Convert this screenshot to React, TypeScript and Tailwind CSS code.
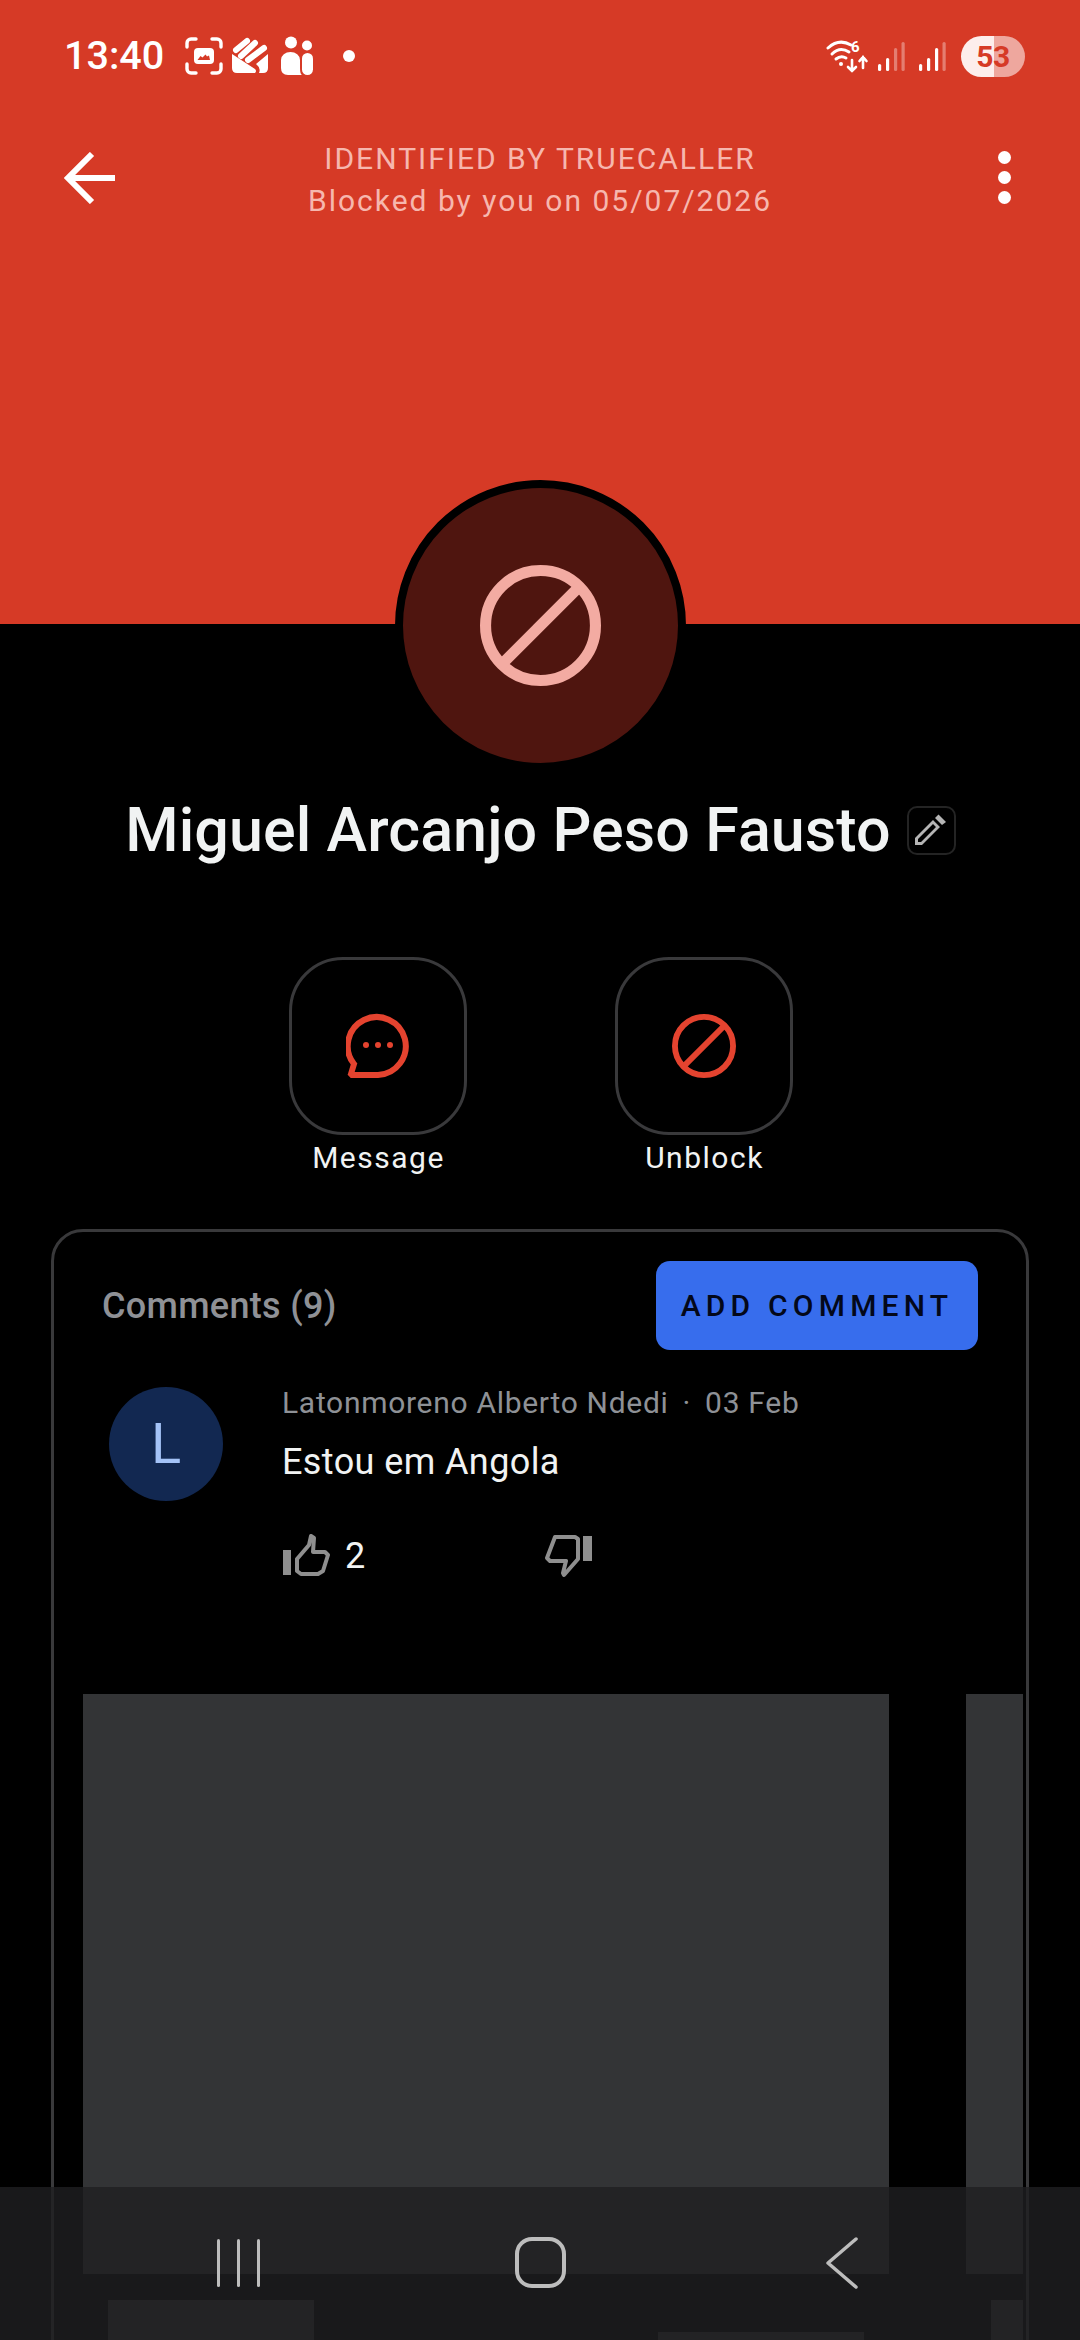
const font = "font-['Roboto',sans-serif]";

function StatusIcons() {
  return (
    <div className="flex items-center">
      {/* screenshot */}
      <svg width="38" height="38" viewBox="0 0 38 38" className="ml-[21px]" fill="none" stroke="#fff" strokeWidth="3.4" strokeLinecap="round">
        <path d="M2 10V6a4 4 0 0 1 4-4h5M27 2h5a4 4 0 0 1 4 4v4M36 27v5a4 4 0 0 1-4 4h-5M11 36H6a4 4 0 0 1-4-4v-5" />
        <rect x="9" y="11" width="20" height="16" rx="4" fill="#fff" stroke="none" />
        <path d="M12.500 23l3-4 2 1.500 3-3 1.500 2 2-1 1 4.500z" fill="#d63a26" stroke="none" />
      </svg>
      {/* mail */}
      <svg width="38" height="38" viewBox="0 0 38 38" className="ml-[8px]">
        <path d="M5 13L16 4M10 19L24 6M17 23L33 11" stroke="#fff" strokeWidth="6" strokeLinecap="round" />
        <path d="M1 17L24 32q2 2 0 4H6q-5 0-5-5zM37 17v14q0 5-5 5h-4q2-5-2-8l-1-1z" fill="#fff" />
      </svg>
      {/* people */}
      <svg width="34" height="40" viewBox="0 0 34 40" className="ml-[11px]" fill="#fff">
        <circle cx="11" cy="6.500" r="6" />
        <circle cx="27" cy="9.500" r="5" />
        <path d="M1 24a9.500 8 0 0 1 19 0v8q0 6 2 7H8q-7 0-7-7z" />
        <rect x="22" y="17" width="11" height="22" rx="5.500" />
      </svg>
      <div className="ml-[29px] w-[12px] h-[12px] rounded-full bg-white" />
    </div>
  );
}

function Signal({ faint }: { faint: number }) {
  const bars = [
    { x: 0, y: 22 },
    { x: 8, y: 16 },
    { x: 16, y: 6 },
    { x: 23.500, y: 0 },
  ];
  return (
    <svg width="27" height="29" viewBox="0 0 27 29">
      {bars.map((b, i) => (
        <rect key={i} x={b.x} y={b.y} width="3.200" height={29 - b.y} rx="1.500" fill="#fff" opacity={i >= 4 - faint ? 0.35 : 1} />
      ))}
    </svg>
  );
}

function StatusRight() {
  return (
    <div className="flex items-center">
      <svg width="44" height="34" viewBox="0 0 44 34" fill="none" stroke="#fff" strokeLinecap="round">
        <path d="M3 9Q14-1 26 6" strokeWidth="3" />
        <path d="M7 15Q15 7 24 13" strokeWidth="3" />
        <path d="M11 20Q16 16 21 19" strokeWidth="3" />
        <circle cx="16" cy="25" r="2" fill="#fff" stroke="none" />
        <text x="26" y="13" fill="#fff" stroke="none" fontSize="15" fontWeight="700" fontFamily="Roboto, sans-serif">6</text>
        <path d="M27 21v11M23 28l4 4 4-4M38 29V18M34.500 22l3.500-4 3.500 4" strokeWidth="2.600" />
      </svg>
      <div className="ml-[9px]"><Signal faint={2} /></div>
      <div className="ml-[14px]"><Signal faint={1} /></div>
      <div className="relative ml-[15px] w-[64px] h-[41px] rounded-full overflow-hidden flex">
        <div className="w-[33px] bg-[#fdeeec]" />
        <div className="flex-1 bg-[#eea79e]" />
        <span className={`absolute inset-0 flex items-center justify-center text-[30px] font-bold tracking-[-0.5px] text-[#d63a26] ${font}`}>53</span>
      </div>
    </div>
  );
}

function BlockIcon({ size, color, stroke }: { size: number; color: string; stroke: number }) {
  return (
    <svg width={size} height={size} viewBox="0 0 120 120" fill="none" stroke={color} strokeWidth={stroke}>
      <circle cx="60" cy="60" r={60 - stroke / 2} />
      <path d="M19 101L101 19" />
    </svg>
  );
}

function ActionButton({ label, children }: { label: string; children: React.ReactNode }) {
  return (
    <div className="flex flex-col items-center w-[178px]">
      <div className="w-[178px] h-[178px] rounded-[54px] border-[3px] border-[#39393b] flex items-center justify-center">
        {children}
      </div>
      <span className="mt-[5px] pl-[2px] text-[30px] leading-[36px] tracking-[1.5px] text-[#f1f3f3] whitespace-nowrap">{label}</span>
    </div>
  );
}

export default function App() {
  return (
    <div className={`relative h-[2340px] w-[1080px] overflow-hidden bg-black ${font}`}>
      {/* Red header */}
      <div className="h-[624px] bg-[#d63a26]">
        <div className="flex items-center justify-between pl-[64px] pr-[55px] pt-[34px] h-[78px]">
          <div className="flex items-center">
            <span className="text-[39.5px] leading-[44px] font-medium text-white">13:40</span>
            <StatusIcons />
          </div>
          <StatusRight />
        </div>
        <div className="mt-[60px] flex items-start justify-between pl-[64px] pr-[69px]">
          <div className="w-[52px] pt-[14px]">
            <svg width="52" height="52" viewBox="0 0 52 52" fill="none" stroke="#fff" strokeWidth="6">
              <path d="M51 26H4M28 2L4 26l24 24" />
            </svg>
          </div>
          <div className="text-center text-[#f6b7ae] text-[30px] leading-[42px] tracking-[2px] whitespace-nowrap">
            <p>IDENTIFIED BY TRUECALLER</p>
            <p>Blocked by you on 05/07/2026</p>
          </div>
          <div className="w-[47px] flex flex-col items-end gap-[7px] pt-[13px]">
            <div className="w-[13px] h-[13px] rounded-full bg-white" />
            <div className="w-[13px] h-[13px] rounded-full bg-white" />
            <div className="w-[13px] h-[13px] rounded-full bg-white" />
          </div>
        </div>
      </div>

      {/* Avatar */}
      <div className="relative -mt-[144px] mx-auto w-[291px] h-[291px] rounded-full border-[8px] border-black bg-[#4f150f] flex items-center justify-center">
        <BlockIcon size={121} color="#f3aba2" stroke={11} />
      </div>

      {/* Name */}
      <div className="mt-[24px] flex items-center justify-center pl-[1px]">
        <h1 className="text-[61px] leading-[70px] tracking-[0.08px] font-medium text-[#f1f3f3] whitespace-nowrap">Miguel Arcanjo Peso Fausto</h1>
        <div className="ml-[16px] w-[49px] h-[49px] rounded-[10px] border-[2px] border-[#242424] flex items-center justify-center">
          <svg width="32" height="32" viewBox="0 0 32 32" fill="#b5b5b5">
            <path d="M0 24L18 6l7 7L7 31H0zM3 25v3h3L21 13l-3-3z" fillRule="evenodd" />
            <path d="M20 4l3.500-3.500L31 8l-4 3z" />
          </svg>
        </div>
      </div>

      {/* Actions */}
      <div className="mt-[92px] flex justify-center gap-[148px] pl-[1px]">
        <ActionButton label="Message">
          <svg width="64" height="66" viewBox="0 0 64 66" fill="none" stroke="#e4432f" strokeWidth="6">
            <path d="M5 61l3-10A29 29 0 1 1 32 62H6z" strokeLinejoin="miter" />
            <circle cx="20" cy="32" r="3" fill="#e4432f" stroke="none" />
            <circle cx="32" cy="32" r="3" fill="#e4432f" stroke="none" />
            <circle cx="44" cy="32" r="3" fill="#e4432f" stroke="none" />
          </svg>
        </ActionButton>
        <ActionButton label="Unblock">
          <BlockIcon size={64} color="#e4432f" stroke={11} />
        </ActionButton>
      </div>

      {/* Comments card */}
      <div className="mt-[53px] ml-[51px] w-[978px] h-[1200px] rounded-[32px] border-[3px] border-[#39393b]">
        <div className="flex items-center justify-between pl-[48px] pr-[48px] pt-[29px]">
          <span className="text-[36px] font-medium tracking-[0.3px] text-[#8f9196]">Comments (9)</span>
          <div className="w-[322px] h-[89px] rounded-[14px] bg-[#376ded] flex items-center justify-center">
            <span className="text-[30px] font-medium tracking-[5.2px] text-[#03081a] whitespace-nowrap">ADD COMMENT</span>
          </div>
        </div>

        <div className="mt-[37px] flex pl-[55px]">
          <div className="w-[114px] h-[114px] rounded-full bg-[#122851] flex items-center justify-center text-[56px] text-[#a4c3f7]">L</div>
          <div className="ml-[59px]">
            <div className="flex items-center -mt-[1px] text-[30px] leading-[34px] tracking-[0.7px] text-[#8e9196]">
              <span>Latonmoreno Alberto Ndedi</span>
              <span className="mx-[14px]">·</span>
              <span>03 Feb</span>
            </div>
            <p className="mt-[22px] text-[36px] leading-[40px] tracking-[0.4px] text-[#f1f3f3]">Estou em Angola</p>
            <div className="mt-[49px] flex items-center">
              <svg width="48" height="42" viewBox="0 0 48 42" fill="none" stroke="#8f8f8f" strokeWidth="4" strokeLinejoin="round">
                <rect x="1" y="16" width="8" height="25" fill="#8f8f8f" stroke="none" />
                <path d="M15 25l12-14 2-9 3 2-1 14h12l3 3-5 16-5 3H19l-4-3z" />
              </svg>
              <span className="ml-[15px] mt-[3px] text-[36px] leading-[40px] text-[#f1f3f3]">2</span>
              <svg width="48" height="44" viewBox="0 0 48 44" fill="none" stroke="#8f8f8f" strokeWidth="4" strokeLinejoin="round" className="ml-[180px] mt-[3px]">
                <rect x="38" y="2" width="9" height="25" fill="#8f8f8f" stroke="none" />
                <path d="M10 3h20l3 2v20L19 41l-1-2 3-12H5l-3-3z" />
              </svg>
            </div>
          </div>
        </div>

        {/* Placeholder media */}
        <div className="mt-[116px] ml-[29px] w-[940px] overflow-hidden">
          <div className="flex gap-[77px]">
            <div className="shrink-0 w-[806px] h-[580px] bg-[#333436]" />
            <div className="shrink-0 w-[200px] h-[580px] bg-[#333436]" />
          </div>
          <div className="mt-[26px] flex items-start pl-[25px]">
            <div className="shrink-0 w-[206px] h-[100px] bg-[#333436]" />
            <div className="shrink-0 ml-[344px] mt-[32px] w-[206px] h-[100px] bg-[#333436]" />
            <div className="shrink-0 ml-[127px] w-[206px] h-[100px] bg-[#333436]" />
          </div>
        </div>
      </div>

      {/* Nav bar */}
      <div className="absolute bottom-0 left-0 right-0 h-[153px] bg-[#1f1f22]/80 flex justify-center items-start pt-[50px]">
        <div className="w-[302px] flex justify-center gap-[17px] pt-[2px]">
          <div className="w-[3px] h-[48px] rounded-full bg-[#bdbdbd]" />
          <div className="w-[3px] h-[48px] rounded-full bg-[#bdbdbd]" />
          <div className="w-[3px] h-[48px] rounded-full bg-[#bdbdbd]" />
        </div>
        <div className="w-[302px] flex justify-center">
          <div className="w-[51px] h-[51px] rounded-[17px] border-[4px] border-[#bdbdbd]" />
        </div>
        <div className="w-[302px] flex justify-center">
          <svg width="32" height="52" viewBox="0 0 32 52" fill="none" stroke="#bdbdbd" strokeWidth="3.500" strokeLinecap="round" strokeLinejoin="round">
            <path d="M30 2L2 26l28 24" />
          </svg>
        </div>
      </div>
    </div>
  );
}
